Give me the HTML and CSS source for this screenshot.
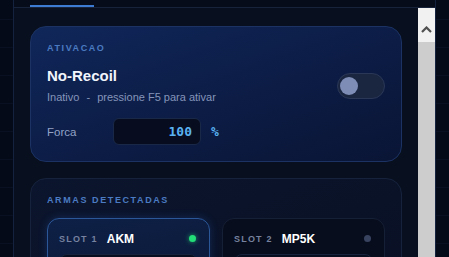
FILE: index.html
```html
<!DOCTYPE html>
<html lang="pt">
<head>
  <meta charset="UTF-8">
  <title>No-Recoil</title>
  <link rel="stylesheet" href="styles.css">
</head>
<body>

  <div class="app">
    <div class="tabs">
      <div class="tab active"></div>
    </div>

    <div class="main">
      <div class="scroll">
        <section class="card card-main">
          <div class="card-label">ATIVACAO</div>

          <div class="feature-row">
            <div>
              <div class="feature-name">No-Recoil</div>
              <div class="feature-status">Inativo <span class="sep">-</span> pressione F5 para ativar</div>
            </div>
            <div class="toggle"><span class="knob"></span></div>
          </div>

          <div class="force-row">
            <span class="force-label">Forca</span>
            <input class="force-input" type="text" value="100">
            <span class="unit">%</span>
          </div>
        </section>

        <section class="card">
          <div class="card-label">ARMAS DETECTADAS</div>

          <div class="slots">
            <div class="slot slot-on">
              <div class="slot-head">
                <span class="slot-num">SLOT 1</span>
                <span class="slot-gun">AKM</span>
                <span class="dot dot-on"></span>
              </div>
              <div class="slot-body"></div>
            </div>

            <div class="slot">
              <div class="slot-head">
                <span class="slot-num">SLOT 2</span>
                <span class="slot-gun">MP5K</span>
                <span class="dot"></span>
              </div>
              <div class="slot-body"></div>
            </div>
          </div>
        </section>
      </div>

      <!-- barra de rolagem -->
      <div class="scrollbar">
        <div class="sb-btn">
          <svg width="11" height="7" viewBox="0 0 11 7">
            <polyline points="1,6 5.5,1.5 10,6" fill="none" stroke="#505050" stroke-width="2.2"/>
          </svg>
        </div>
        <div class="sb-thumb"></div>
      </div>
    </div>
  </div>

</body>
</html>
```

FILE: styles.css
```css
html, body {
  margin: 0;
  height: 100%;
}
body {
  font-family: "Liberation Sans", Arial, sans-serif;
  background-color: #050a18;
  background-image: linear-gradient(rgba(60, 100, 180, 0.07) 1px, transparent 1px);
  background-size: 100% 28px;
  background-position: 0 19px;
  color: #e6ecf8;
  overflow: hidden;
}
.app {
  box-sizing: border-box;
  height: 100vh;
  margin: 0 13px;
  display: flex;
  flex-direction: column;
  background: #08101f;
  border-left: 1px solid #14223f;
  border-right: 1px solid #14223f;
}
.tabs {
  height: 7px;
  flex: none;
  display: flex;
  padding-left: 16px;
  border-bottom: 1px solid #17233b;
  background: #060c19;
}
.tab {
  width: 64px;
  height: 5px;
}
.tab.active {
  border-bottom: 2px solid #3d7bd3;
}
.main {
  flex: 1;
  min-height: 0;
  display: flex;
}
.scroll {
  flex: 1;
  min-width: 0;
  overflow: hidden;
  padding: 18px 16px 16px;
  display: flex;
  flex-direction: column;
  gap: 16px;
}
.scrollbar {
  width: 17px;
  flex: none;
  display: flex;
  flex-direction: column;
  background: #f1f1f1;
}
.sb-btn {
  height: 34px;
  box-sizing: border-box;
  padding-top: 18px;
  display: flex;
  justify-content: center;
  align-items: flex-start;
}
.sb-btn svg {
  display: block;
}
.sb-thumb {
  flex: 1;
  background: #cdcdcd;
}
.card {
  flex: none;
  border: 1px solid #16223c;
  border-radius: 16px;
  background: linear-gradient(160deg, #0b152d, #090f22);
  padding: 16px;
}
.card-main {
  border-color: #1b3263;
  background: linear-gradient(160deg, #10275a 0%, #0c1c45 55%, #0a1535 100%);
}
.card-label {
  font-size: 9px;
  line-height: 11px;
  font-weight: bold;
  letter-spacing: 1.6px;
  color: #4b7bc2;
}
.feature-row {
  display: flex;
  align-items: center;
  justify-content: space-between;
  margin-top: 13px;
}
.feature-name {
  font-size: 15px;
  line-height: 18px;
  font-weight: bold;
  color: #f2f5fc;
}
.feature-status {
  margin-top: 6px;
  font-size: 11px;
  line-height: 13px;
  color: #8595ba;
}
.sep {
  margin: 0 4px;
}
.toggle {
  box-sizing: border-box;
  width: 48px;
  height: 26px;
  border-radius: 13px;
  background: #1a2540;
  border: 1px solid #2a3757;
  padding: 2px;
}
.knob {
  display: block;
  width: 18px;
  height: 18px;
  margin-top: 1px;
  border-radius: 50%;
  background: #7e8db6;
}
.force-row {
  display: flex;
  align-items: center;
  margin-top: 14px;
}
.force-label {
  width: 66px;
  font-size: 11.5px;
  color: #93a3c6;
}
.force-input {
  box-sizing: border-box;
  width: 88px;
  height: 27px;
  padding: 0 8px;
  border: 1px solid #1a2848;
  border-radius: 6px;
  background: #070d1e;
  color: #5ab2f2;
  font-family: "DejaVu Sans Mono", monospace;
  font-size: 13px;
  font-weight: bold;
  text-align: right;
  outline: none;
}
.unit {
  margin-left: 10px;
  font-family: "DejaVu Sans Mono", monospace;
  font-size: 13px;
  font-weight: bold;
  color: #5ab2f2;
}
.slots {
  display: grid;
  grid-template-columns: 1fr 1fr;
  gap: 12px;
  margin-top: 12px;
}
.slot {
  border: 1px solid #151f35;
  border-radius: 12px;
  background: #070d1c;
  padding: 12px 11px;
}
.slot-on {
  border-color: #2b5799;
  background: linear-gradient(170deg, #0e2046, #0a1632);
  box-shadow: 0 0 8px rgba(50, 110, 220, 0.25);
}
.slot-head {
  display: flex;
  align-items: center;
  height: 15px;
}
.slot-num {
  font-size: 9px;
  font-weight: bold;
  letter-spacing: 1.2px;
  color: #76829f;
}
.slot-gun {
  margin-left: 9px;
  font-size: 12px;
  font-weight: bold;
  color: #ffffff;
}
.dot {
  width: 7px;
  height: 7px;
  margin-left: auto;
  margin-right: 2px;
  border-radius: 50%;
  background: #384360;
}
.dot-on {
  background: #23dd78;
  box-shadow: 0 0 5px rgba(35, 221, 120, 0.7);
}
.slot-body {
  height: 60px;
  margin-top: 8px;
  border: 1px solid #17233c;
  border-radius: 8px;
  background: #070e20;
}
```
